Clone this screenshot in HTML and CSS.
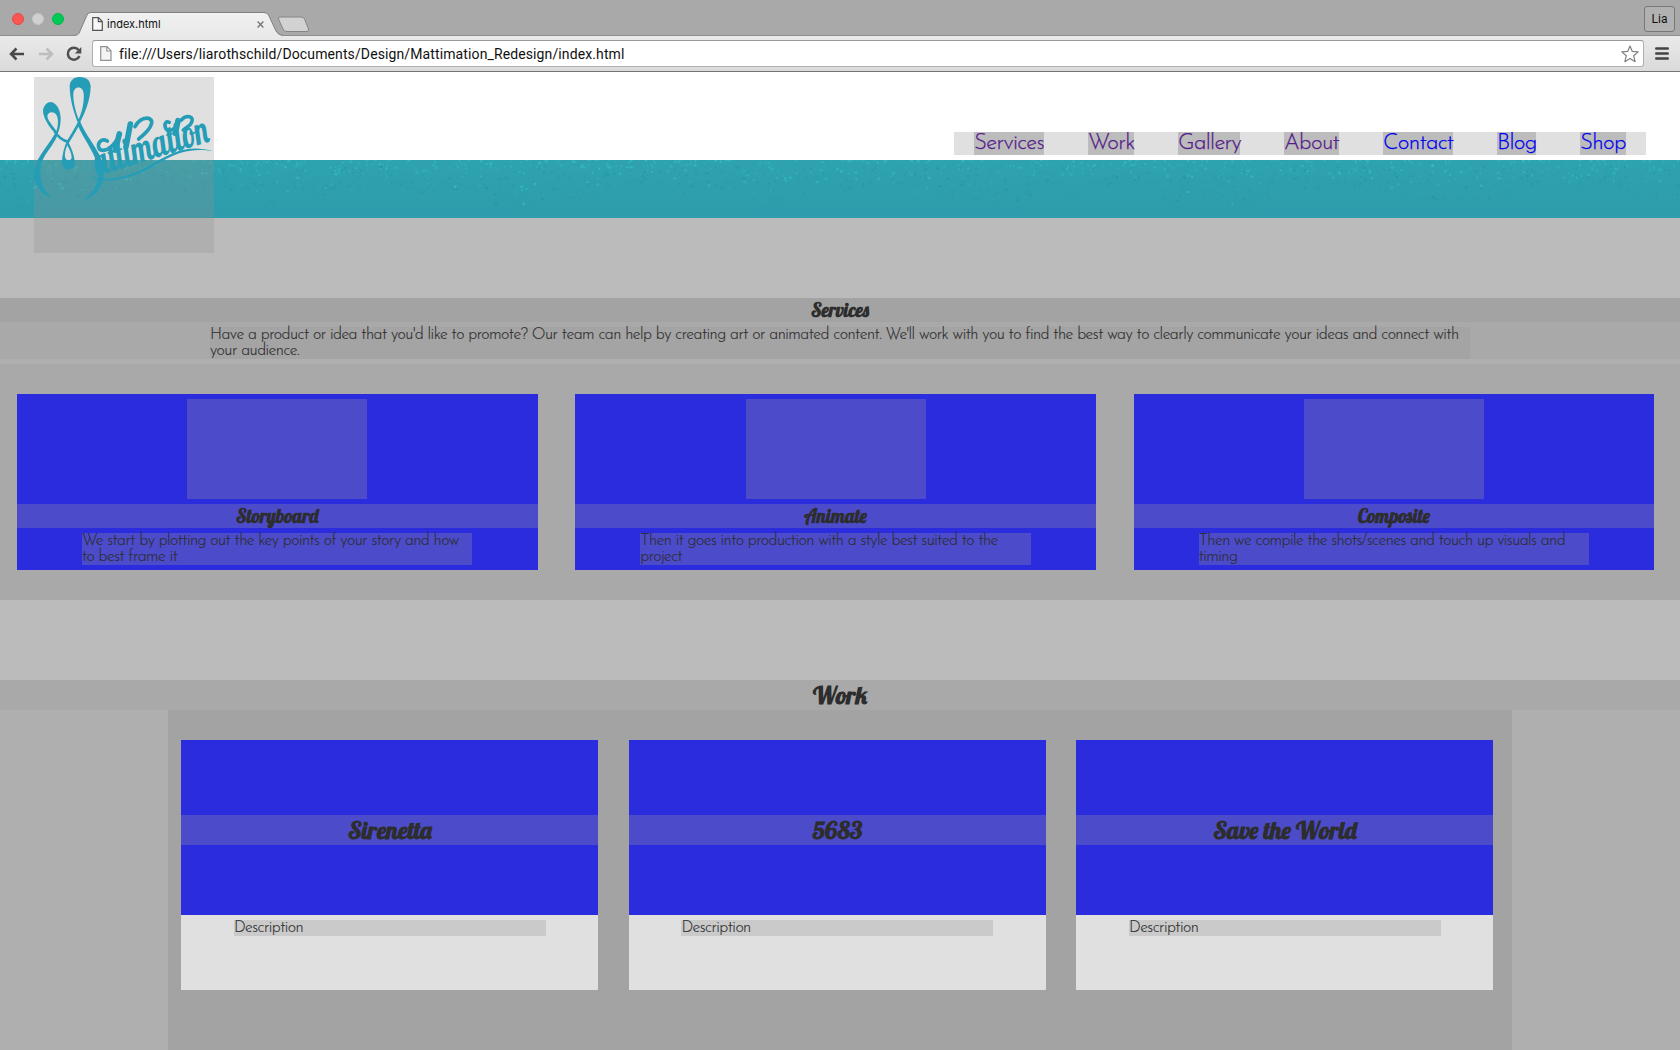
FILE: index.html
```html
<!DOCTYPE html>
<html lang="en">
<head>
<meta charset="utf-8">
<title>index.html</title>
<link rel="stylesheet" href="styles.css">
</head>
<body>
<div class="chrome">
  <div class="tabbar">
    <div class="lights"><i class="light red"></i><i class="light idle"></i><i class="light green"></i></div>
    <div class="tab">
      <svg class="tab-shape" width="212" height="24" viewBox="0 0 212 24">
        <defs><linearGradient id="tg" x1="0" y1="0" x2="0" y2="1"><stop offset="0" stop-color="#f1f1f1"/><stop offset="1" stop-color="#e9e9e9"/></linearGradient></defs>
        <path d="M0 24C4 23 5 22 6 19L13 3Q14 .5 17 .5H190Q193 .5 194.500 3L202 19Q204 23 209 24Z" fill="url(#tg)"/>
        <path d="M0 23.500C4 23 5 22 6 19L13 3Q14 .5 17 .5H190Q193 .5 194.500 3L202 19Q204 23 209 23.500" fill="none" stroke="#808080"/>
      </svg>
      <svg class="tab-page" width="11" height="14" viewBox="0 0 11 14"><path d="M.7.7H6.500L10.300 4.500V13.300H.7ZM6.300.7V4.700H10.300" fill="#f8f8f8" stroke="#555" stroke-width="1.200"/></svg>
      <span class="tab-title">index.html</span>
      <svg class="tab-close" width="7" height="7" viewBox="0 0 7 7"><path d="M.6.6L6.400 6.400M6.400.6L.6 6.400" stroke="#777" stroke-width="1.400"/></svg>
    </div>
    <svg class="newtab" width="33" height="17" viewBox="0 0 33 17"><path d="M3 1H24Q26.500 1 27.500 3L31.500 13Q32 15.500 30 15.500H10Q7 15.500 6 13L1.500 3Q1 1 3 1Z" fill="#d2d2d2" stroke="#858585"/></svg>
    <span class="profile">Lia</span>
  </div>
  <div class="toolbar">
    <svg class="back" width="16" height="14" viewBox="0 0 16 14"><path d="M15 7H2M7.500 1.500L2 7L7.500 12.500" fill="none" stroke="#484848" stroke-width="2.500"/></svg>
    <svg class="forward" width="16" height="14" viewBox="0 0 16 14"><path d="M1 7H14M8.500 1.500L14 7L8.500 12.500" fill="none" stroke="#bdbdbd" stroke-width="2.500"/></svg>
    <svg class="reload" width="16" height="16" viewBox="0 0 16 16"><path d="M12.600 4A6 6 0 1 0 13.400 10" fill="none" stroke="#505050" stroke-width="2.500"/><path d="M15.300 1V7.500H8.800Z" fill="#505050"/></svg>
    <div class="omnibox">
      <svg width="12" height="15" viewBox="0 0 12 15"><path d="M.7.7H7L11 4.700V14.300H.7ZM6.800.7V5H11" fill="#f4f4f4" stroke="#929292" stroke-width="1.200"/></svg>
      <span class="url">file:///Users/liarothschild/Documents/Design/Mattimation_Redesign/index.html</span>
      <svg width="18" height="18" viewBox="0 0 18 18"><path d="M9 1L11.300 6.400L17.200 6.900L12.700 10.800L14.100 16.700L9 13.600L3.900 16.700L5.300 10.800L.8 6.900L6.700 6.400Z" fill="#fff" stroke="#808080" stroke-width="1.200" stroke-linejoin="round"/></svg>
    </div>
    <svg class="menu" width="14" height="13" viewBox="0 0 14 13"><path d="M1.300 1.500H12.700M1.300 6.500H12.700M1.300 11.500H12.700" stroke="#444" stroke-width="2.600" stroke-linecap="round"/></svg>
  </div>
</div>

<header class="header">
  <nav class="nav">
    <a class="seen w1" href="#services">Services</a>
    <a class="seen w2" href="#work">Work</a>
    <a class="seen w3" href="#gallery">Gallery</a>
    <a class="seen w4" href="#about">About</a>
    <a class="w5" href="#contact">Contact</a>
    <a class="w6" href="#blog">Blog</a>
    <a class="w7" href="#shop">Shop</a>
  </nav>
  <div class="logo">
    <svg width="180" height="176" viewBox="42 21 540 528">
      <g fill="#259db7" fill-rule="evenodd">
        <path d="M97 385C60 370 41 345 42 310C44 265 85 230 107 186L114 192C98 235 64 255 61 300C60 345 75 368 97 385Z"/>
        <path d="M110 195C85 170 68 140 69 120C72 105 82 96 92 96C112 98 123 125 122 150C121 170 117 185 110 195ZM109 183C97 165 82 150 82 138C84 125 103 122 111 138C116 152 114 170 109 183Z"/>
        <path d="M142 210C155 235 165 260 164 280C162 293 155 298 145 298C134 297 126 288 126 275C126 255 133 230 142 210ZM142 226C135 240 133 255 136 265C140 273 152 273 155 264C155 250 148 238 142 226Z"/>
        <path d="M176 164C160 125 149 85 149 45C152 28 165 21 180 21C200 22 211 30 212 50C211 90 195 130 176 164ZM176 148C165 120 159 90 160 70C162 48 188 46 191 70C193 95 187 125 176 148Z"/>
        <path d="M171 160L181 155C200 205 247 245 252 300C254 350 225 380 190 392C215 370 235 350 236 310C234 255 190 210 171 160Z"/>
        <path d="M206 312C230 334 290 330 350 306C420 275 480 212 580 244C500 228 450 258 380 300C300 338 230 342 206 312Z"/>
      </g>
      <path d="M104 184Q120 210 144 215Q160 190 178 157" fill="none" stroke="#259db7" stroke-width="8"/>
      <path d="M262 213C242 202 229 222 239 238C255 247 280 235 300 192M345 170C365 134 402 140 394 163C389 181 371 195 356 207M448 157C428 148 432 188 452 181C462 178 468 170 474 160M483 151C500 132 523 139 515 157C510 169 500 171 490 180" fill="none" stroke="#259db7" stroke-width="11" stroke-linecap="round"/>
      <path d="M298 192L286 240M331 162L318 230M474 152L466 190" fill="none" stroke="#259db7" stroke-width="17" stroke-linecap="round"/>
      <text class="lettering" x="0" y="0" transform="translate(232 318) rotate(-17)" textLength="356" lengthAdjust="spacingAndGlyphs">attimation</text>
    </svg>
  </div>
</header>
<svg class="band" id="band" width="1680" height="58" viewBox="0 0 1680 58"></svg>

<section class="services">
  <h2 class="title">Services</h2>
  <div class="intro"><p class="copy">Have a product or idea that you'd like to promote? Our team can help by creating art or animated content. We'll work with you to find the best way to clearly communicate your ideas and connect with<br>your audience.</p></div>
  <div class="service-row">
    <article class="service"><div class="thumb"></div><h3 class="title">Storyboard</h3><p class="copy">We start by plotting out the key points of your story and how<br>to best frame it</p></article>
    <article class="service"><div class="thumb"></div><h3 class="title">Animate</h3><p class="copy">Then it goes into production with a style best suited to the<br>project</p></article>
    <article class="service"><div class="thumb"></div><h3 class="title">Composite</h3><p class="copy">Then we compile the shots/scenes and touch up visuals and<br>timing</p></article>
  </div>
</section>

<section class="work">
  <h2 class="title big">Work</h2>
  <div class="work-row">
    <article class="project"><div class="cover"><h3 class="title big">Sirenetta</h3></div><p class="copy">Description</p></article>
    <article class="project"><div class="cover"><h3 class="title big">5683</h3></div><p class="copy">Description</p></article>
    <article class="project"><div class="cover"><h3 class="title big">Save the World</h3></div><p class="copy">Description</p></article>
  </div>
</section>
<script src="speckle.js"></script>
</body>
</html>
```
FILE: speckle.js
```js
// Scatter light flecks along the top of the teal band and dark ones below.
(function () {
  var seed = 7;
  function rnd() {
    seed = (seed * 16807) % 2147483647;
    return seed / 2147483647;
  }
  var ns = 'http://www.w3.org/2000/svg';
  var band = document.getElementById('band');
  for (var i = 0; i < 1300; i++) {
    var light = i % 2 === 0;
    var x = rnd() * 1680;
    var wave = 8 * Math.sin(x / 37) + 5 * Math.sin(x / 13);
    var y = light ? rnd() * rnd() * (34 + wave) : 6 + rnd() * (30 + wave);
    var e = document.createElementNS(ns, 'ellipse');
    e.setAttribute('cx', x.toFixed(1));
    e.setAttribute('cy', y.toFixed(1));
    e.setAttribute('rx', (0.8 + rnd() * 0.9).toFixed(1));
    e.setAttribute('ry', (0.8 + rnd() * 0.8).toFixed(1));
    e.setAttribute('fill', light ? '#35bcc4' : '#2688a0');
    e.setAttribute('opacity', (light ? 0.25 + rnd() * 0.5 : 0.08 + rnd() * 0.25).toFixed(2));
    band.appendChild(e);
  }
})();
```
FILE: styles.css
```css
* { box-sizing: border-box; margin: 0; padding: 0; }
body { width: 1680px; height: 1050px; overflow: hidden; background: #bbb; color: #2d2d2d; font-family: "Josefin Sans", Lato, sans-serif; }
svg { display: block; flex: none; }

/* Browser frame */
.chrome { height: 72px; font-family: Roboto, sans-serif; color: #111; }
.tabbar { height: 36px; display: flex; align-items: flex-end; background: #a9a9a9; border-bottom: 1px solid #8e8e8e; }
.lights { display: flex; gap: 8px; padding: 0 0 10px 12px; width: 74px; }
.light { width: 12px; height: 12px; border-radius: 50%; }
.red { background: #fc5652; border: 1px solid #e8474a; }
.idle { background: #d0d0d0; border: 1px solid #c4c4c4; }
.green { background: #00ca56; border: 1px solid #04b54c; }
.tab { position: relative; width: 212px; height: 24px; margin-bottom: -1px; display: flex; align-items: center; padding: 0 22px 0 18px; }
.tab-shape { position: absolute; left: 0; top: 0; }
.tab-page, .tab-title, .tab-close { position: relative; }
.tab-title { flex: 1; margin-left: 4px; font: 11px/14px Inter, sans-serif; }
.newtab { margin: 0 0 2px -9px; }
.profile { margin: 0 5px 3px auto; width: 31px; height: 26px; border: 1px solid #777; border-radius: 3px; background: #b1b1b1; font-size: 12px; line-height: 25px; text-align: center; }
.toolbar { height: 36px; display: flex; align-items: center; padding: 0 11px 0 9px; background: linear-gradient(#eaeaea, #dadada); border-bottom: 1px solid #747474; }
.forward { margin-left: 13px; }
.reload { margin-left: 12px; }
.omnibox { flex: 1; display: flex; align-items: center; height: 27px; margin: 0 11px 0 10px; padding: 0 4px 0 7px; background: #fff; border: 1px solid #b0b0b0; border-top-color: #989898; border-radius: 3px; }
.url { flex: 1; margin-left: 7px; font-size: 14px; letter-spacing: .114px; }

/* Header */
.header { position: relative; height: 88px; background: #fff; display: flex; justify-content: flex-end; align-items: flex-end; padding: 0 34px 5px 0; }
.nav { display: flex; justify-content: space-between; width: 692px; height: 23px; padding: 0 20px; background: #e0e0e0; }
.nav a { display: block; background: #bcbcbc; color: #00e; font-size: 22.400px; font-weight: 300; line-height: 23px; letter-spacing: -.7px; -webkit-text-stroke: .25px; white-space: nowrap; text-decoration: none; }
.nav a.seen { color: #551a8b; }
.w1 { width: 70px; }
.w2 { width: 46px; }
.w3 { width: 62px; }
.w4 { width: 55px; }
.w5 { width: 70px; }
.w6 { width: 39px; }
.w7 { width: 46px; }
.logo { position: absolute; left: 34px; top: 5px; width: 180px; height: 176px; background: rgba(144, 144, 144, .28); z-index: 1; }
.logo svg { overflow: visible; }
.lettering { font: 118px Lobster, "Liberation Serif", serif; fill: #259db7; }
.band { background: linear-gradient(#2ea3ae, #2d9cac); }

/* Shared text */
.title { height: 24px; text-align: center; font: bold 18.720px/24px Lobster, "Liberation Serif", serif; }
.title.big { height: 30px; font-size: 24px; line-height: 30px; }
.copy { font-weight: 300; font-size: 16px; line-height: 16px; letter-spacing: -.59px; -webkit-text-stroke: .15px; white-space: nowrap; }

/* Services */
.services { margin-top: 80px; height: 302px; background: #afafaf; }
.services > .title { background: #a3a3a3; }
.intro { height: 37px; padding: 5px 210px 0; background: #a9a9a9; }
.intro .copy { height: 32px; background: #a4a4a4; letter-spacing: -.565px; }
.service-row { display: grid; grid-template-columns: repeat(3, 520.800px); justify-content: space-between; margin-top: 5px; height: 236px; padding: 30px 25.600px 30px 16.800px; background: #a9a9a9; }
.service { display: flex; flex-direction: column; gap: 5px; padding-top: 5px; background: #2c2cdf; }
.service .thumb { width: 180px; height: 100px; align-self: center; background: #4c4ccb; }
.service .title { background: #4c4ccb; }
.service .copy { width: 390.600px; height: 32px; align-self: center; background: #4c4ccb; }

/* Work */
.work { margin-top: 80px; height: 370px; background: #afafaf; }
.work > .title { background: #a9a9a9; }
.work-row { display: grid; grid-template-columns: repeat(3, 417px); justify-content: space-between; align-items: start; width: 1344px; height: 340px; margin: 0 auto; padding: 30px 18.500px 0 13.400px; background: #a3a3a3; }
.project { height: 250px; background: #e0e0e0; }
.cover { height: 175px; padding-top: 75px; background: #2c2cdf; }
.cover .title { background: #4c4ccb; }
.project .copy { width: 312px; margin: 5px auto 0; background: #cacaca; }
```
